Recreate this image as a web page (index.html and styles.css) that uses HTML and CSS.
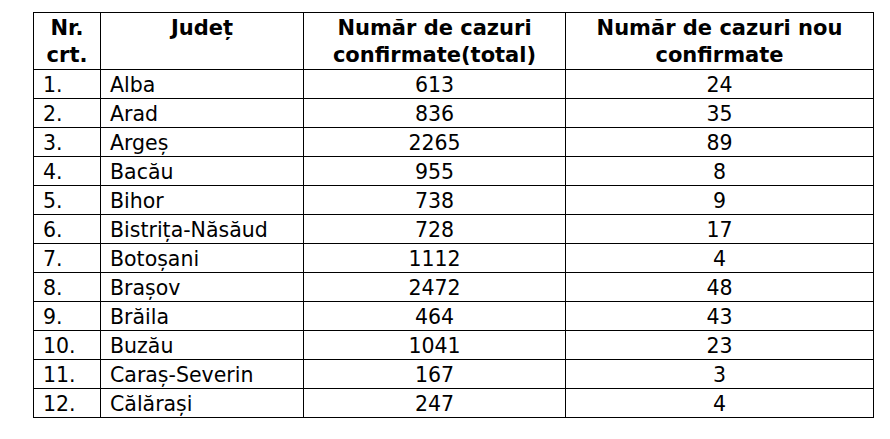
FILE: index.html
```html
<!DOCTYPE html>
<html lang="ro">
<head>
<meta charset="utf-8">
<title>Cazuri confirmate</title>
<link rel="stylesheet" href="styles.css">
</head>
<body>
<table class="cases">
  <colgroup>
    <col class="c-nr">
    <col class="c-jud">
    <col class="c-tot">
    <col class="c-nou">
  </colgroup>
  <thead>
    <tr>
      <th>Nr.<br>crt.</th>
      <th>Județ</th>
      <th>Număr de cazuri<br>confirmate(total)</th>
      <th>Număr de cazuri nou<br>confirmate</th>
    </tr>
  </thead>
  <tbody>
    <tr><td>1.</td><td>Alba</td><td class="num">613</td><td class="num">24</td></tr>
    <tr><td>2.</td><td>Arad</td><td class="num">836</td><td class="num">35</td></tr>
    <tr><td>3.</td><td>Argeș</td><td class="num">2265</td><td class="num">89</td></tr>
    <tr><td>4.</td><td>Bacău</td><td class="num">955</td><td class="num">8</td></tr>
    <tr><td>5.</td><td>Bihor</td><td class="num">738</td><td class="num">9</td></tr>
    <tr><td>6.</td><td>Bistrița-Năsăud</td><td class="num">728</td><td class="num">17</td></tr>
    <tr><td>7.</td><td>Botoșani</td><td class="num">1112</td><td class="num">4</td></tr>
    <tr><td>8.</td><td>Brașov</td><td class="num">2472</td><td class="num">48</td></tr>
    <tr><td>9.</td><td>Brăila</td><td class="num">464</td><td class="num">43</td></tr>
    <tr><td>10.</td><td>Buzău</td><td class="num">1041</td><td class="num">23</td></tr>
    <tr><td>11.</td><td>Caraș-Severin</td><td class="num">167</td><td class="num">3</td></tr>
    <tr><td>12.</td><td>Călărași</td><td class="num">247</td><td class="num">4</td></tr>
  </tbody>
</table>
</body>
</html>
```
FILE: styles.css
```css
html, body {
  margin: 0;
  padding: 0;
  background: #fff;
}
body {
  padding: 12px 0 0 33px;
  font-family: "DejaVu Sans", Verdana, sans-serif;
  color: #000;
}
.cases {
  border-collapse: collapse;
  table-layout: fixed;
  width: 840px;
  border: 1px solid #000;
}
.c-nr { width: 67px; }
.c-jud { width: 203px; }
.c-tot { width: 262px; }
.c-nou { width: 308px; }
.cases th,
.cases td {
  border: 1px solid #000;
  vertical-align: top;
  white-space: nowrap;
  overflow: hidden;
}
.cases th {
  font-weight: bold;
  font-size: 21px;
  line-height: 27px;
  padding: 2px 0 0 0;
  text-align: center;
}
.cases td {
  font-size: 20.5px;
  line-height: 25px;
  padding: 3px 0 0 9px;
  text-align: left;
}
.cases td.num {
  text-align: center;
  padding-left: 0;
}
```
